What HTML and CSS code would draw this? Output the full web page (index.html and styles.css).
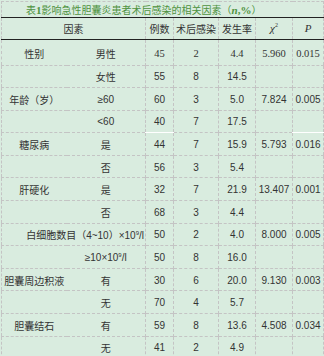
FILE: index.html
```html
<!DOCTYPE html>
<html lang="zh">
<head>
<meta charset="utf-8">
<link rel="stylesheet" href="styles.css">
</head>
<body>
<table class="tbl">
<colgroup><col class="ca"><col class="cb"><col class="cc"><col class="cd"><col class="ce"><col class="cf"><col class="cg"></colgroup>
<tr class="title"><td colspan="7"><span class="ttext">表<b class="sn">1</b>影响急性胆囊炎患者术后感染的相关因素（<b class="sn"><i>n</i>,%</b>）</span></td></tr>
<tr class="head"><th colspan="2">因素</th><th>例数</th><th>术后感染</th><th>发生率</th><th class="sym"><i>χ</i><sup>2</sup></th><th class="sym"><i>P</i></th></tr>
<tr class="r first"><td class="fa">性别</td><td class="fb">男性</td><td class="ser">45</td><td class="ser">2</td><td class="ser">4.4</td><td class="ser">5.960</td><td class="ser">0.015</td></tr>
<tr class="r"><td class="fa"></td><td class="fb">女性</td><td class="num">55</td><td class="num">8</td><td class="num">14.5</td><td class="num"></td><td class="num"></td></tr>
<tr class="r"><td class="fa">年龄（岁）</td><td class="fb num">≥60</td><td class="num">60</td><td class="num">3</td><td class="num">5.0</td><td class="num">7.824</td><td class="num">0.005</td></tr>
<tr class="r"><td class="fa"></td><td class="fb num">&lt;60</td><td class="num">40</td><td class="num">7</td><td class="num">17.5</td><td class="num"></td><td class="num"></td></tr>
<tr class="r"><td class="fa">糖尿病</td><td class="fb">是</td><td class="num wt">44</td><td class="num">7</td><td class="num">15.9</td><td class="num">5.793</td><td class="num wt">0.016</td></tr>
<tr class="r"><td class="fa"></td><td class="fb">否</td><td class="num">56</td><td class="num">3</td><td class="num">5.4</td><td class="num"></td><td class="num"></td></tr>
<tr class="r"><td class="fa">肝硬化</td><td class="fb">是</td><td class="num">32</td><td class="num">7</td><td class="num">21.9</td><td class="num">13.407</td><td class="num">0.001</td></tr>
<tr class="r"><td class="fa"></td><td class="fb">否</td><td class="num">68</td><td class="num">3</td><td class="num">4.4</td><td class="num"></td><td class="num"></td></tr>
<tr class="r"><td class="fwide" colspan="2">白细胞数目（<span class="num">4~10</span>）<span class="num">×10<sup>9</sup>/l</span></td><td class="num">50</td><td class="num">2</td><td class="num">4.0</td><td class="num">8.000</td><td class="num">0.005</td></tr>
<tr class="r"><td class="fa"></td><td class="fb num">≥10×10<sup>9</sup>/l</td><td class="num">50</td><td class="num">8</td><td class="num">16.0</td><td class="num"></td><td class="num"></td></tr>
<tr class="r"><td class="fa">胆囊周边积液</td><td class="fb">有</td><td class="num">30</td><td class="num">6</td><td class="num">20.0</td><td class="num">9.130</td><td class="num">0.003</td></tr>
<tr class="r"><td class="fa"></td><td class="fb">无</td><td class="num">70</td><td class="num">4</td><td class="num">5.7</td><td class="num"></td><td class="num"></td></tr>
<tr class="r"><td class="fa">胆囊结石</td><td class="fb">有</td><td class="num">59</td><td class="num">8</td><td class="num">13.6</td><td class="num">4.508</td><td class="num">0.034</td></tr>
<tr class="r"><td class="fa"></td><td class="fb">无</td><td class="num">41</td><td class="num">2</td><td class="num">4.9</td><td class="num"></td><td class="num"></td></tr>
</table>
</body>
</html>
```

FILE: styles.css
```css
html, body {
  background: #d9ecdf;
}
body {
  margin: 1px 0 0 1px;
  font-family: "Noto Sans CJK SC", "Noto Sans", sans-serif;
  font-size: 10px;
  color: #333;
}
.tbl {
  width: 322px;
  table-layout: fixed;
  border-collapse: collapse;
  border: 1px dashed #c4c4c4;
}
.ca { width: 65px; }
.cb { width: 79px; }
.cc { width: 28px; }
.cd { width: 45px; }
.ce { width: 37px; }
.cf { width: 37px; }
.cg { width: 31px; }

.tbl td, .tbl th {
  padding: 0;
  text-align: center;
  vertical-align: middle;
  white-space: nowrap;
  font-weight: normal;
  line-height: 13px;
}
.title td {
  height: 15px;
  text-align: left;
  padding-left: 24px;
  border-bottom: 1px solid #222;
  color: #4f9341;
  font-size: 10px;
}
.sn {
  font-family: "Liberation Serif", serif;
  font-weight: bold;
  font-size: 11px;
}
.head th {
  height: 21px;
  border-bottom: 1px solid #222;
  border-left: 1px dashed #c4c4c4;
}
.head th:first-child { border-left: none; }
.sym {
  font-family: "Liberation Serif", serif;
  font-size: 11px;
}
.sym sup { font-size: 6px; vertical-align: 5px; }
.r td {
  height: 20.6px;
  padding-top: 1px;
  border-top: 1px dashed #c4c4c4;
  border-left: 1px dashed #c4c4c4;
}
.r.first td { border-top: 1px solid #222; height: 22.5px; padding-top: 2px; }
.r td.fa { border-left: none; }
.r td.fb { border-left: none; }
.r td.fwide { border-left: none; text-align: right; padding-right: 1px; }
.r td.wt { border-top: 1px solid #fff; }
.num {
  font-family: "Liberation Sans", sans-serif;
  font-size: 10px;
}
.ser {
  font-family: "Liberation Serif", serif;
  font-size: 10.5px;
}
sup { font-size: 6px; vertical-align: 4px; line-height: 0; }
```
